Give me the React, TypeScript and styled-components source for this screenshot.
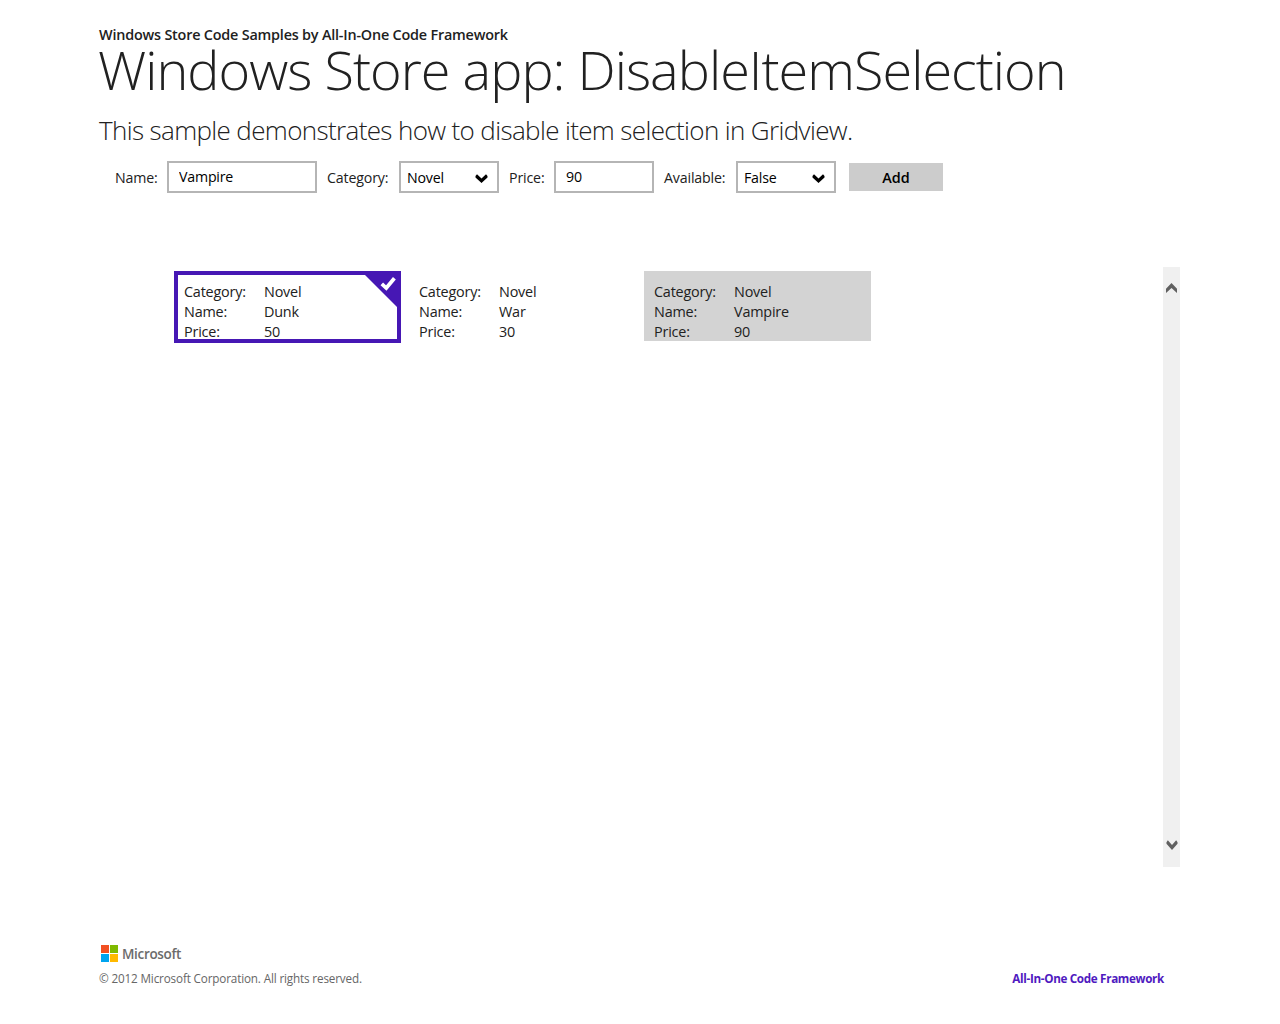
import React from 'react';
import styled, { createGlobalStyle } from 'styled-components';

const GlobalStyle = createGlobalStyle`
  * { box-sizing: border-box; }
  body {
    margin: 0;
    background: #fff;
    color: #212121;
    font-family: "Open Sans", "Noto Sans", sans-serif;
    font-size: 14.4px;
    line-height: 20px;
    letter-spacing: -0.2px;
  }
`;

const Page = styled.div`
  width: 1280px;
  height: 1024px;
  padding: 27px 100px 0 99px;
  display: flex;
  flex-direction: column;
  overflow: hidden;
  white-space: nowrap;
`;

const Eyebrow = styled.div`
  line-height: 16px;
  font-weight: 600;
  letter-spacing: -0.2px;
`;

const Title = styled.h1`
  margin: 0 0 0 -1px;
  font-size: 54px;
  line-height: 52px;
  font-weight: 300;
  letter-spacing: -0.97px;
`;

const Subtitle = styled.p`
  margin: 17px 0 0;
  font-size: 26px;
  line-height: 36px;
  font-weight: 300;
  letter-spacing: -0.635px;
`;

const Form = styled.form`
  display: flex;
  align-items: center;
  height: 32px;
  margin-top: 13px;
  padding-left: 16px;
`;

const Label = styled.label<{ $width: number }>`
  width: ${p => p.$width}px;
  margin-right: 10px;
  padding-top: 2px;
  font-size: 14.2px;
  letter-spacing: -0.15px;
`;

const Input = styled.input<{ $width: number }>`
  width: ${p => p.$width}px;
  height: 32px;
  margin-right: 10px;
  padding: 0 10px 2px;
  border: 2px solid #b5b5b5;
  border-radius: 0;
  background: #fff;
  color: #000;
  font: inherit;
  font-size: 14.2px;
  letter-spacing: inherit;
`;

const Combo = styled.div`
  display: flex;
  align-items: center;
  justify-content: space-between;
  width: 100px;
  height: 32px;
  margin-right: 10px;
  padding: 2px 9px 0 6px;
  border: 2px solid #b5b5b5;
  color: #000;
  font-size: 14.2px;

  svg { margin-top: 1px; }
`;

const AddButton = styled.button`
  width: 94px;
  height: 28px;
  margin-left: 3px;
  padding: 2px 0 0;
  border: 0;
  background: #ccc;
  color: #000;
  font: inherit;
  font-weight: 600;
  letter-spacing: 0;
`;

const ListView = styled.section`
  display: flex;
  justify-content: space-between;
  height: 600px;
  margin-top: 74px;
`;

const Cards = styled.div`
  display: flex;
  align-items: flex-start;
  gap: 8px;
  padding: 4px 0 0 75px;
`;

const Card = styled.article<{ $selected?: boolean; $disabled?: boolean }>`
  position: relative;
  display: grid;
  grid-template-columns: 80px 1fr;
  grid-auto-rows: 20px;
  width: 227px;
  height: ${p => (p.$selected ? 72 : 70)}px;
  padding: ${p => (p.$selected ? '7px 6px 0' : '11px 10px 0')};
  border: ${p => (p.$selected ? '4px solid #4617b4' : '0')};
  background: ${p => (p.$disabled ? '#d3d3d3' : '#fff')};
  overflow: hidden;
`;

const Corner = styled.svg`
  position: absolute;
  top: 0;
  right: 0;
`;

const ScrollBar = styled.div`
  display: flex;
  flex-direction: column;
  align-items: center;
  justify-content: space-between;
  width: 17px;
  padding: 16px 0 17px;
  background: #f0f0f0;
`;

const Footer = styled.footer`
  display: flex;
  flex-direction: column;
  margin-top: 78px;
`;

const Brand = styled.div`
  display: flex;
  align-items: center;
  gap: 4px;
  height: 17px;
  padding-left: 2px;
  color: #6b6b6b;
  font-size: 13.5px;
  font-weight: 600;
  letter-spacing: -0.33px;
`;

const Squares = styled.div`
  display: grid;
  grid-template-columns: 8px 8px;
  grid-auto-rows: 8px;
  gap: 1px;
`;

const Square = styled.i<{ $color: string }>`
  background: ${p => p.$color};
`;

const Legal = styled.div`
  display: flex;
  justify-content: space-between;
  margin-top: 8px;
  padding-right: 16px;
  font-size: 11.7px;
  line-height: 16px;
  letter-spacing: -0.15px;
  color: #666;
`;

const Link = styled.a`
  color: #4f1ac0;
  font-weight: 700;
  font-size: 11.7px;
  letter-spacing: -0.34px;
`;

const Chevron = ({ up, color = '#000', width = 13, height = 9 }: { up?: boolean; color?: string; width?: number; height?: number }) => (
  <svg width={width} height={height} viewBox="0 0 13 9" preserveAspectRatio="none">
    <path
      d={up ? 'M0 9V5.2L6.5 0L13 5.2V9L6.5 4.4Z' : 'M.5 2L2 .2L6.5 4.4L11 .2L12.5 2V3.4L6.5 9L.5 3.4Z'}
      fill={color}
    />
  </svg>
);

const books = [
  { category: 'Novel', name: 'Dunk', price: 50, selected: true },
  { category: 'Novel', name: 'War', price: 30 },
  { category: 'Novel', name: 'Vampire', price: 90, disabled: true },
];

export default function App() {
  return (
    <Page>
      <GlobalStyle />
      <Eyebrow>Windows Store Code Samples by All-In-One Code Framework</Eyebrow>
      <Title>Windows Store app: DisableItemSelection</Title>
      <Subtitle>This sample demonstrates how to disable item selection in Gridview.</Subtitle>

      <Form>
        <Label $width={42}>Name:</Label>
        <Input $width={150} defaultValue="Vampire" />
        <Label $width={62}>Category:</Label>
        <Combo>Novel<Chevron /></Combo>
        <Label $width={35}>Price:</Label>
        <Input $width={100} defaultValue="90" />
        <Label $width={62}>Available:</Label>
        <Combo>False<Chevron /></Combo>
        <AddButton type="button">Add</AddButton>
      </Form>

      <ListView>
        <Cards>
          {books.map(b => (
            <Card key={b.name} $selected={b.selected} $disabled={b.disabled}>
              <span>Category:</span><span>{b.category}</span>
              <span>Name:</span><span>{b.name}</span>
              <span>Price:</span><span>{b.price}</span>
              {b.selected && (
                <Corner width="33" height="32" viewBox="0 0 33 32">
                  <path d="M1 0H33V32Z" fill="#4617b4" />
                  <path d="M17.8 8.8L22.3 13L30.4 3.2" fill="none" stroke="#fff" strokeWidth="3.7" />
                </Corner>
              )}
            </Card>
          ))}
        </Cards>
        <ScrollBar>
          <Chevron up color="#606060" width={11} height={10} />
          <Chevron color="#606060" width={12} height={10} />
        </ScrollBar>
      </ListView>

      <Footer>
        <Brand>
          <Squares>
            <Square $color="#f25022" />
            <Square $color="#7fba00" />
            <Square $color="#00a4ef" />
            <Square $color="#ffb900" />
          </Squares>
          Microsoft
        </Brand>
        <Legal>
          <span>© 2012 Microsoft Corporation. All rights reserved.</span>
          <Link>All-In-One Code Framework</Link>
        </Legal>
      </Footer>
    </Page>
  );
}
